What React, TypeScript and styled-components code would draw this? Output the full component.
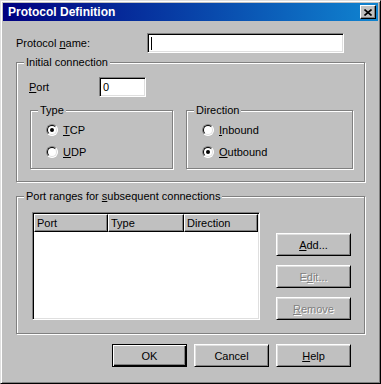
import React from "react";
import styled, { createGlobalStyle, css } from "styled-components";

const GlobalStyle = createGlobalStyle`
  html, body {
    margin: 0;
    padding: 0;
    background: #c0c0c0;
  }
  body {
    font-family: "Liberation Sans", Arial, sans-serif;
    font-size: 11px;
    color: #000;
  }
`;

const Window = styled.div`
  width: 381px;
  height: 384px;
  box-sizing: border-box;
  background: #c0c0c0;
  border: 1px solid;
  border-color: #dfdfdf #000 #000 #dfdfdf;
  box-shadow: inset 1px 1px 0 #fff, inset -1px -1px 0 #808080;
  padding: 2px;
  display: flex;
  flex-direction: column;
`;

const TitleBar = styled.div`
  height: 18px;
  display: flex;
  align-items: center;
  justify-content: space-between;
  padding: 0 2px 0 5px;
  background: linear-gradient(to right, #000080, #1084d0);
`;

const TitleText = styled.span`
  color: #fff;
  font-weight: bold;
  font-size: 12px;
`;

const CloseButton = styled.div`
  width: 16px;
  height: 14px;
  box-sizing: border-box;
  background: #c0c0c0;
  border: 1px solid;
  border-color: #fff #000 #000 #fff;
  box-shadow: inset -1px -1px 0 #808080;
  display: flex;
  align-items: center;
  justify-content: center;
`;

const Body = styled.div`
  padding: 12px 13px 0 13px;
  display: flex;
  flex-direction: column;
`;

const Row = styled.div`
  display: flex;
  align-items: center;
`;

const Label = styled.span<{ $w: number }>`
  width: ${(p) => p.$w}px;
  flex: none;
`;

const U = styled.span`
  text-decoration: underline;
  text-underline-offset: 1px;
`;

const Edit = styled.div<{ $w: number }>`
  position: relative;
  width: ${(p) => p.$w}px;
  height: 20px;
  box-sizing: border-box;
  background: #fff;
  border: 1px solid;
  border-color: #808080 #fff #fff #808080;
  box-shadow: inset 1px 1px 0 #000, inset -1px -1px 0 #dfdfdf;
  display: flex;
  align-items: center;
  padding-left: 3px;
`;

const Caret = styled.span`
  width: 1px;
  height: 13px;
  background: #000;
`;

const Group = styled.div<{ $w?: number; $h?: number }>`
  position: relative;
  box-sizing: border-box;
  border: 1px solid #808080;
  box-shadow: inset 1px 1px 0 #fff, 1px 1px 0 #fff;
  ${(p) => p.$w && css`width: ${p.$w}px;`}
  ${(p) => p.$h && css`height: ${p.$h}px;`}
`;

const Legend = styled.span`
  position: absolute;
  top: -7px;
  left: 7px;
  padding: 0 2px;
  line-height: 13px;
  background: #c0c0c0;
  white-space: nowrap;
`;

const InitialGroup = styled(Group)`
  margin-top: 9px;
  padding: 14px 0 12px 12px;
`;

const SubGroups = styled.div`
  display: flex;
  gap: 13px;
  margin-top: 13px;
  padding-left: 1px;
`;

const RadioList = styled(Group)`
  display: flex;
  flex-direction: column;
  gap: 2px;
  padding: 9px 0 0 15px;
`;

const RadioRow = styled.div`
  height: 20px;
  display: flex;
  align-items: center;
  gap: 5px;
`;

const RadioCircle = styled.span<{ $checked?: boolean }>`
  position: relative;
  width: 12px;
  height: 12px;
  flex: none;
  box-sizing: border-box;
  border-radius: 50%;
  border: 1px solid;
  border-color: #808080 #fff #fff #808080;
  background: #fff;
  &::before {
    content: "";
    position: absolute;
    inset: 0;
    box-sizing: border-box;
    border-radius: 50%;
    border: 1px solid;
    border-color: #000 #dfdfdf #dfdfdf #000;
  }
  ${(p) =>
    p.$checked &&
    css`
      &::after {
        content: "";
        position: absolute;
        left: 3px;
        top: 3px;
        width: 4px;
        height: 4px;
        border-radius: 50%;
        background: #000;
      }
    `}
`;

const RangesGroup = styled(Group)`
  margin-top: 14px;
  padding: 15px 13px 13px 15px;
  display: flex;
  justify-content: space-between;
`;

const ListView = styled.div`
  width: 228px;
  height: 108px;
  box-sizing: border-box;
  background: #fff;
  border: 1px solid;
  border-color: #808080 #fff #fff #808080;
  box-shadow: inset 1px 1px 0 #000, inset -1px -1px 0 #dfdfdf;
  padding: 1px;
`;

const HeaderRow = styled.div`
  display: grid;
  grid-template-columns: 74px 76px 74px;
  height: 18px;
`;

const HeaderCell = styled.div`
  box-sizing: border-box;
  background: #c0c0c0;
  border: 1px solid;
  border-color: #fff #000 #000 #fff;
  box-shadow: inset -1px -1px 0 #808080;
  padding-left: 2px;
  display: flex;
  align-items: center;
`;

const SideButtons = styled.div`
  display: flex;
  flex-direction: column;
  gap: 9px;
  padding-top: 21px;
`;

const Button = styled.div<{ $default?: boolean; $disabled?: boolean }>`
  width: 75px;
  height: 23px;
  box-sizing: border-box;
  background: #c0c0c0;
  border: 1px solid;
  border-color: #fff #000 #000 #fff;
  box-shadow: inset 1px 1px 0 #dfdfdf, inset -1px -1px 0 #808080;
  display: flex;
  align-items: center;
  justify-content: center;
  ${(p) =>
    p.$default &&
    css`
      border-color: #000;
      box-shadow: inset 1px 1px 0 #fff, inset -1px -1px 0 #000,
        inset -2px -2px 0 #808080;
    `}
  ${(p) =>
    p.$disabled &&
    css`
      color: #808080;
      text-shadow: 1px 1px 0 #fff;
    `}
`;

const Footer = styled.div`
  display: flex;
  justify-content: flex-end;
  gap: 7px;
  margin-top: 10px;
  padding-right: 14px;
`;

function CloseIcon() {
  return (
    <svg width="8" height="7" viewBox="0 0 8 7">
      <path d="M0.5 0.5 L7.5 6.5 M7.5 0.5 L0.5 6.5" stroke="#000" strokeWidth="1.6" />
    </svg>
  );
}

function Radio({ checked, children }: { checked?: boolean; children: React.ReactNode }) {
  return (
    <RadioRow>
      <RadioCircle $checked={checked} />
      <span>{children}</span>
    </RadioRow>
  );
}

export default function App() {
  return (
    <>
      <GlobalStyle />
      <Window>
        <TitleBar>
          <TitleText>Protocol Definition</TitleText>
          <CloseButton>
            <CloseIcon />
          </CloseButton>
        </TitleBar>
        <Body>
          <Row>
            <Label $w={131}>
              Protocol <U>n</U>ame:
            </Label>
            <Edit $w={197}>
              <Caret />
            </Edit>
          </Row>

          <InitialGroup>
            <Legend>Initial connection</Legend>
            <Row>
              <Label $w={70}>
                <U>P</U>ort
              </Label>
              <Edit $w={47}>0</Edit>
            </Row>
            <SubGroups>
              <RadioList $w={143} $h={59}>
                <Legend>Type</Legend>
                <Radio checked>
                  <U>T</U>CP
                </Radio>
                <Radio>
                  <U>U</U>DP
                </Radio>
              </RadioList>
              <RadioList $w={167} $h={59}>
                <Legend>Direction</Legend>
                <Radio>
                  <U>I</U>nbound
                </Radio>
                <Radio checked>
                  <U>O</U>utbound
                </Radio>
              </RadioList>
            </SubGroups>
          </InitialGroup>

          <RangesGroup>
            <Legend>
              Port ranges for <U>s</U>ubsequent connections
            </Legend>
            <ListView>
              <HeaderRow>
                <HeaderCell>Port</HeaderCell>
                <HeaderCell>Type</HeaderCell>
                <HeaderCell>Direction</HeaderCell>
              </HeaderRow>
            </ListView>
            <SideButtons>
              <Button>
                <span>
                  <U>A</U>dd...
                </span>
              </Button>
              <Button $disabled>
                <span>
                  E<U>d</U>it...
                </span>
              </Button>
              <Button $disabled>
                <span>
                  <U>R</U>emove
                </span>
              </Button>
            </SideButtons>
          </RangesGroup>

          <Footer>
            <Button $default>OK</Button>
            <Button>Cancel</Button>
            <Button>
              <span>
                <U>H</U>elp
              </span>
            </Button>
          </Footer>
        </Body>
      </Window>
    </>
  );
}
